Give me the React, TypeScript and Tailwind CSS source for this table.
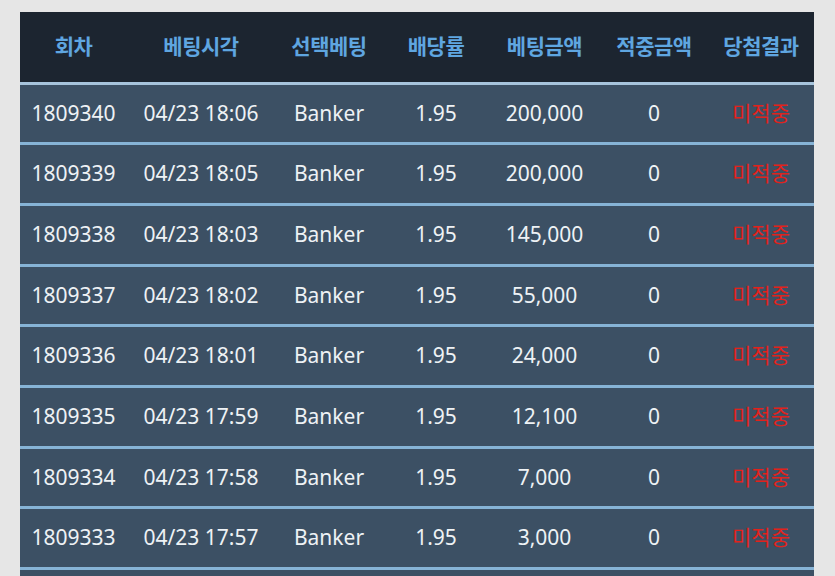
import React from "react";

type Bet = {
  round: string;
  time: string;
  pick: string;
  odds: string;
  amount: string;
  win: string;
  result: string;
};

const bets: Bet[] = [
  { round: "1809340", time: "04/23 18:06", pick: "Banker", odds: "1.95", amount: "200,000", win: "0", result: "미적중" },
  { round: "1809339", time: "04/23 18:05", pick: "Banker", odds: "1.95", amount: "200,000", win: "0", result: "미적중" },
  { round: "1809338", time: "04/23 18:03", pick: "Banker", odds: "1.95", amount: "145,000", win: "0", result: "미적중" },
  { round: "1809337", time: "04/23 18:02", pick: "Banker", odds: "1.95", amount: "55,000", win: "0", result: "미적중" },
  { round: "1809336", time: "04/23 18:01", pick: "Banker", odds: "1.95", amount: "24,000", win: "0", result: "미적중" },
  { round: "1809335", time: "04/23 17:59", pick: "Banker", odds: "1.95", amount: "12,100", win: "0", result: "미적중" },
  { round: "1809334", time: "04/23 17:58", pick: "Banker", odds: "1.95", amount: "7,000", win: "0", result: "미적중" },
  { round: "1809333", time: "04/23 17:57", pick: "Banker", odds: "1.95", amount: "3,000", win: "0", result: "미적중" },
];

const headers = ["회차", "베팅시각", "선택베팅", "배당률", "베팅금액", "적중금액", "당첨결과"];
const widths = ["w-[107px]", "w-[148px]", "w-[108px]", "w-[106px]", "w-[111px]", "w-[108px]", "w-[106px]"];

const App = () => {
  return (
    <div
      className="h-[576px] w-[835px] overflow-hidden bg-[#e6e6e6] pt-[12px] pl-[20px]"
      style={{ fontFamily: '"Noto Sans", "Noto Sans CJK KR", sans-serif' }}
    >
      <table className="w-[794px] table-fixed border-collapse text-center">
        <colgroup>
          {widths.map((w, i) => (
            <col key={i} className={w} />
          ))}
        </colgroup>

        {/* Header */}
        <thead>
          <tr className="h-[71px] bg-[#1c2530]">
            {headers.map((h) => (
              <th key={h} className="p-0 text-[21px] font-bold text-[#5fa6e0] tracking-[-0.5px]">
                {h}
              </th>
            ))}
          </tr>
        </thead>

        {/* Rows */}
        <tbody>
          {bets.map((b, i) => (
            <tr
              key={b.round}
              className={
                i === 0
                  ? "h-[60.7px] border-t-[3px] border-[#a7c4dc] bg-[#3c5064]"
                  : "h-[60.7px] border-t-[3px] border-[#86b3d6] bg-[#3c5064]"
              }
            >
              <td className="p-0 text-[21px] text-[#eef2f5]">{b.round}</td>
              <td className="p-0 text-[21px] text-[#eef2f5]">{b.time}</td>
              <td className="p-0 text-[21px] text-[#eef2f5]">{b.pick}</td>
              <td className="p-0 text-[21px] text-[#eef2f5]">{b.odds}</td>
              <td className="p-0 text-[21px] text-[#eef2f5]">{b.amount}</td>
              <td className="p-0 text-[21px] text-[#eef2f5]">{b.win}</td>
              <td className="p-0 text-[21px] text-[#e2221c]">{b.result}</td>
            </tr>
          ))}
          {/* next row, cut off by the window */}
          <tr className="h-[60.7px] border-t-[3px] border-[#86b3d6] bg-[#3c5064]">
            <td colSpan={7} />
          </tr>
        </tbody>
      </table>
    </div>
  );
};

export default App;
